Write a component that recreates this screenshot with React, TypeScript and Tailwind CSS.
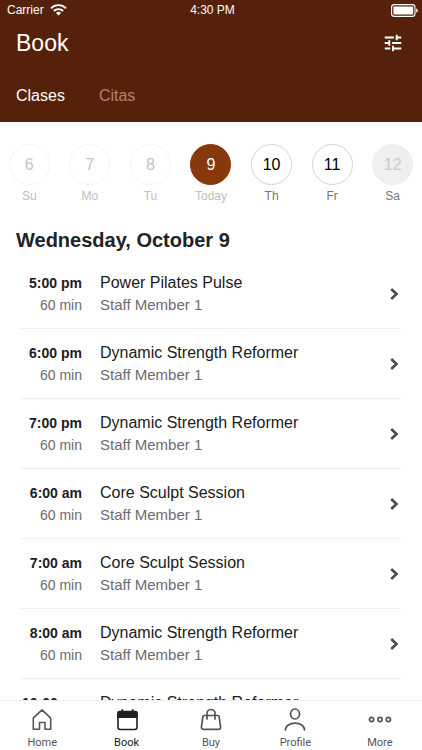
import React, { useState } from 'react';

const days = [
  { num: 6, label: 'Su', circle: 'border-[#f4f4f4] text-[#c4c4c4]', text: 'text-[#c0c0c0]' },
  { num: 7, label: 'Mo', circle: 'border-[#f4f4f4] text-[#c4c4c4]', text: 'text-[#c0c0c0]' },
  { num: 8, label: 'Tu', circle: 'border-[#f4f4f4] text-[#c4c4c4]', text: 'text-[#c0c0c0]' },
  { num: 9, label: 'Today', circle: 'border-[#87380c] bg-[#87380c] text-white', text: 'text-[#c0c0c0]' },
  { num: 10, label: 'Th', circle: 'border-[#d4d4d4] text-black', text: 'text-[#757575]' },
  { num: 11, label: 'Fr', circle: 'border-[#d4d4d4] text-black', text: 'text-[#757575]' },
  { num: 12, label: 'Sa', circle: 'border-[#efefef] bg-[#efefef] text-[#c8c8c8]', text: 'text-[#757575]' },
];

const classes = [
  { time: '5:00 pm', name: 'Power Pilates Pulse' },
  { time: '6:00 pm', name: 'Dynamic Strength Reformer' },
  { time: '7:00 pm', name: 'Dynamic Strength Reformer' },
  { time: '6:00 am', name: 'Core Sculpt Session' },
  { time: '7:00 am', name: 'Core Sculpt Session' },
  { time: '8:00 am', name: 'Dynamic Strength Reformer' },
  { time: '10:00 am', name: 'Dynamic Strength Reformer' },
];

const StatusBar: React.FC = () => (
  <div className="grid h-5 grid-cols-[1fr_auto_1fr] items-center pl-[7px] pr-1 text-xs">
    <div className="flex items-center gap-[6px]">
      <span>Carrier</span>
      <svg width="17" height="12" viewBox="0 0 17 12" fill="none" stroke="currentColor" strokeWidth="1.9">
        <path d="M1 4.2a10.7 10.7 0 0 1 15 0" />
        <path d="M3.8 7a6.8 6.8 0 0 1 9.4 0" />
        <path d="M8.5 11.6 6 9a3.6 3.6 0 0 1 5 0z" fill="currentColor" stroke="none" />
      </svg>
    </div>
    <span className="text-center">4:30 PM</span>
    <svg className="justify-self-end" width="27" height="13" viewBox="0 0 27 13" fill="none">
      <rect x="0.6" y="0.6" width="23.4" height="11.8" rx="2.6" stroke="currentColor" strokeWidth="1.1" />
      <rect x="2.4" y="2.4" width="19.8" height="8.2" rx="0.8" fill="currentColor" />
      <path d="M25.2 4.4c1 .3 1.6 1.1 1.6 2.1s-.6 1.8-1.6 2.1z" fill="currentColor" />
    </svg>
  </div>
);

const HomeIcon: React.FC = () => (
  <svg width="24" height="24" viewBox="0 0 24 24" fill="none" stroke="currentColor" strokeWidth="1.6" strokeLinejoin="round">
    <path d="M3.3 10.2 12 1.8l8.700 8.400V21.300h-5.700v-6.800H9.500v6.800H3.300z" />
  </svg>
);

const BookIcon: React.FC = () => (
  <svg width="24" height="24" viewBox="0 0 24 24" fill="none">
    <path d="M7.300 1.200v3M17.700 1.200v3" stroke="currentColor" strokeWidth="1.800" />
    <rect x="3" y="4" width="19" height="17.500" rx="2.200" stroke="currentColor" strokeWidth="1.600" />
    <path d="M2.200 10V5a2.200 2.200 0 0 1 2.200-2.200h16.200A2.200 2.200 0 0 1 22.800 5v5z" fill="currentColor" />
  </svg>
);

const BuyIcon: React.FC = () => (
  <svg width="24" height="24" viewBox="0 0 24 24" fill="none" stroke="currentColor" strokeWidth="1.700" strokeLinecap="round" strokeLinejoin="round">
    <path d="M5.200 7.500h13.600a1.300 1.300 0 0 1 1.300 1.100l1.500 10.500a2 2 0 0 1-2 2.300H4.400a2 2 0 0 1-2-2.300L3.900 8.600a1.300 1.300 0 0 1 1.300-1.100z" />
    <path d="M8 11V5.500a4 4 0 0 1 8 0V11" />
  </svg>
);

const ProfileIcon: React.FC = () => (
  <svg width="24" height="24" viewBox="0 0 24 24" fill="none" stroke="currentColor" strokeWidth="1.700" strokeLinecap="round">
    <ellipse cx="12" cy="6" rx="4.500" ry="5" />
    <path d="M2.500 22c0-4.200 4.200-6.800 9.500-6.800s9.500 2.600 9.500 6.800" />
  </svg>
);

const MoreIcon: React.FC = () => (
  <svg width="24" height="24" viewBox="0 0 24 24" fill="none" stroke="currentColor" strokeWidth="1.700">
    <circle cx="3.600" cy="11.500" r="2.100" />
    <circle cx="12" cy="11.500" r="2.100" />
    <circle cx="20.400" cy="11.500" r="2.100" />
  </svg>
);

const navItems = [
  { label: 'Home', icon: HomeIcon },
  { label: 'Book', icon: BookIcon },
  { label: 'Buy', icon: BuyIcon },
  { label: 'Profile', icon: ProfileIcon },
  { label: 'More', icon: MoreIcon },
];

export default function App() {
  const [tab, setTab] = useState('Clases');

  return (
    <div className="flex h-dvh flex-col bg-white font-['Liberation_Sans',Arial,sans-serif]">
      <header className="bg-[#56210b] text-white">
        <StatusBar />
        <div className="flex h-[45px] items-center justify-between pl-4 pr-[18px]">
          <h1 className="text-[23px] leading-7">Book</h1>
          <button aria-label="Filters">
            <svg width="22" height="22" viewBox="0 0 24 24" fill="currentColor">
              <path d="M3 17v2h6v-2H3zM3 5v2h10V5H3zm10 16v-2h8v-2h-8v-2h-2v6h2zM7 9v2H3v2h4v2h2V9H7zm14 4v-2H11v2h10zm-6-4h2V7h4V5h-4V3h-2v6z" />
            </svg>
          </button>
        </div>
        <div className="flex h-[57px] items-center gap-[34px] px-4 pt-1 text-base">
          {['Clases', 'Citas'].map((name) => (
            <button key={name} onClick={() => setTab(name)} className={tab === name ? 'text-white' : 'text-[#a98573]'}>
              {name}
            </button>
          ))}
        </div>
      </header>

      <main className="min-h-0 flex-1 overflow-y-auto overflow-x-hidden [scrollbar-width:none]">
        <div className="-mx-px grid grid-cols-7 pt-[22px]">
          {days.map((day) => (
            <button key={day.num} className="flex flex-col items-center gap-[3px]">
              <span className={`flex size-[41px] items-center justify-center rounded-full border text-base ${day.circle}`}>
                {day.num}
              </span>
              <span className={`text-xs ${day.text}`}>{day.label}</span>
            </button>
          ))}
        </div>

        <h2 className="px-4 pt-[22px] text-xl leading-7 font-bold text-[#232323]">Wednesday, October 9</h2>

        <ul className="pl-5 pr-[21px] pt-[5px]">
          {classes.map((item) => (
            <li key={item.time} className="h-[70px] border-b border-[#efefef]">
              <a href="#" className="flex h-full items-center">
                <div className="w-[62px] text-right text-sm leading-[22px]">
                  <div className="font-bold text-[#202020]">{item.time}</div>
                  <div className="text-[#6c6c72]">60 min</div>
                </div>
                <div className="flex-1 pl-[18px]">
                  <div className="text-base leading-[22px] text-[#202020]">{item.name}</div>
                  <div className="text-[15px] leading-[22px] text-[#6c6c72]">Staff Member 1</div>
                </div>
                <svg width="12" height="14" viewBox="0 0 12 14" fill="none" stroke="#4b4b4f" strokeWidth="2.600">
                  <path d="M2.200 2 7.500 7l-5.300 5" />
                </svg>
              </a>
            </li>
          ))}
        </ul>
      </main>

      <nav className="grid h-[50px] grid-cols-5 border-t border-[#f0f0f0] bg-white font-[Roboto,sans-serif]">
        {navItems.map(({ label, icon: Icon }) => (
          <a
            key={label}
            href="#"
            className={`flex flex-col items-center gap-[5px] pt-[7px] text-[11px] leading-3 ${label === 'Book' ? 'text-[#202024]' : 'text-[#55555b]'}`}
          >
            <Icon />
            {label}
          </a>
        ))}
      </nav>
    </div>
  );
}
